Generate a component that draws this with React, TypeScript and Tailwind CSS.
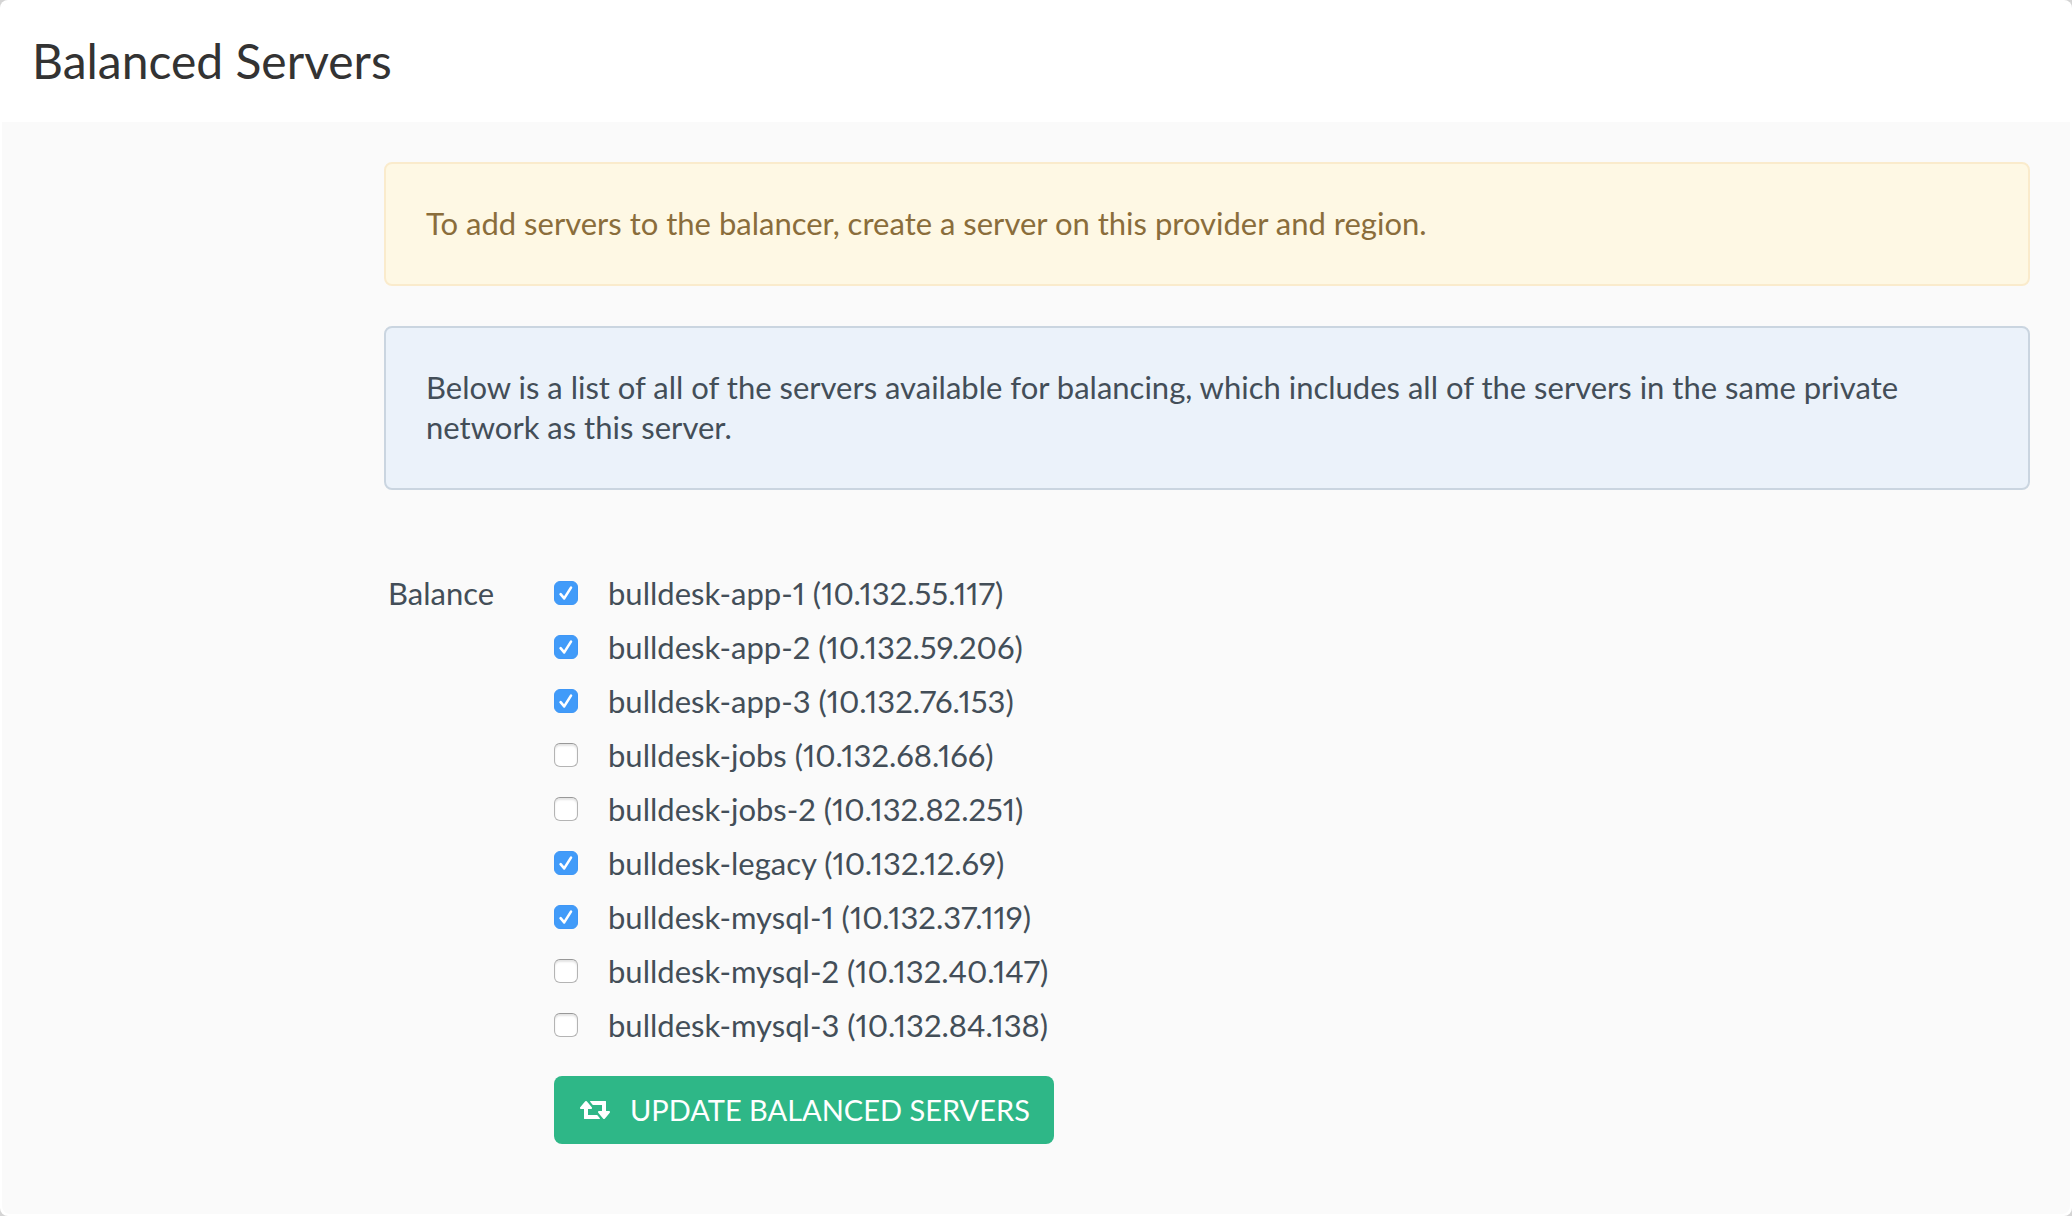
import { useState } from "react";

const SERVERS = [
  { name: "bulldesk-app-1", ip: "10.132.55.117", balanced: true },
  { name: "bulldesk-app-2", ip: "10.132.59.206", balanced: true },
  { name: "bulldesk-app-3", ip: "10.132.76.153", balanced: true },
  { name: "bulldesk-jobs", ip: "10.132.68.166", balanced: false },
  { name: "bulldesk-jobs-2", ip: "10.132.82.251", balanced: false },
  { name: "bulldesk-legacy", ip: "10.132.12.69", balanced: true },
  { name: "bulldesk-mysql-1", ip: "10.132.37.119", balanced: true },
  { name: "bulldesk-mysql-2", ip: "10.132.40.147", balanced: false },
  { name: "bulldesk-mysql-3", ip: "10.132.84.138", balanced: false },
];

function RetweetIcon() {
  return (
    <svg viewBox="0 128 1920 1152" className="h-[18px] w-[30px] shrink-0" fill="currentColor" aria-hidden="true">
      <path d="M1280 1248q0 13-9.5 22.5t-22.5 9.5h-960q-8 0-13.5-2t-9-7-5.5-8-3-11.5-1-11.5v-600h-192q-26 0-45-19t-19-45q0-24 15-41l320-384q19-22 49-22t49 22l320 384q15 17 15 41 0 26-19 45t-45 19h-192v384h576q16 0 25 11l160 192q7 10 7 21zm640-416q0 24-15 41l-320 384q-20 23-49 23t-49-23l-320-384q-15-17-15-41 0-26 19-45t45-19h192v-384h-576q-16 0-25-12l-160-192q-7-9-7-20 0-13 9.5-22.5t22.5-9.5h960q8 0 13.5 2t9 7 5.5 8 3 11.5 1 11.5v600h192q26 0 45 19t19 45z" />
    </svg>
  );
}

function Checkbox({ id, checked, onChange }: { id: string; checked: boolean; onChange: () => void }) {
  return (
    <span className="relative flex size-6 shrink-0">
      <input
        id={id}
        type="checkbox"
        checked={checked}
        onChange={onChange}
        className="peer size-6 appearance-none rounded-md border border-[#b4b4b4] border-t-[#989898] bg-white shadow-[inset_0_2px_2px_#e4e4e4] checked:border-[#3f97f6] checked:bg-[#419bf9] checked:shadow-none"
      />
      <svg
        viewBox="0 0 24 24"
        className="pointer-events-none absolute inset-0 hidden size-6 peer-checked:block"
        fill="none"
        stroke="white"
        strokeWidth="2.6"
        strokeLinecap="round"
        strokeLinejoin="round"
        aria-hidden="true"
      >
        <path d="M6.6 13.2 10.2 17.4 17 6.6" />
      </svg>
    </span>
  );
}

export default function App() {
  const [servers, setServers] = useState(SERVERS);
  const toggle = (name: string) =>
    setServers((list) => list.map((s) => (s.name === name ? { ...s, balanced: !s.balanced } : s)));

  return (
    <div className="bg-[#d4d4d4] font-['Lato',sans-serif] text-[31px] leading-10 text-[#434e58]">
      <main className="rounded-lg bg-white p-0.5">
        <header className="px-[30px] pt-[31px] pb-[33px]">
          <h1 className="text-5xl leading-14 text-[#333333]">Balanced Servers</h1>
        </header>
        <section className="rounded-b-lg bg-[#fafafa] pt-10 pr-10 pb-[70px] pl-[382px]">
          <p className="rounded-lg border-2 border-[#faebcc] bg-[#fef8e4] px-10 pt-[39px] pb-[41px] text-[#8a6d3b]">
            To add servers to the balancer, create a server on this provider and region.
          </p>
          <p className="mt-10 rounded-lg border-2 border-[#cad5e0] bg-[#ebf2fa] px-10 pt-[39px] pb-[41px]">
            Below is a list of all of the servers available for balancing, which includes all of the servers in the same
            private network as this server.
          </p>
          <form className="mt-[76px] flex" onSubmit={(e) => e.preventDefault()}>
            <span id="balance-label" className="w-[170px] shrink-0 pl-1 leading-[54px]">
              Balance
            </span>
            <div>
              <ul role="group" aria-labelledby="balance-label">
                {servers.map((s) => (
                  <li key={s.name} className="flex h-[54px] items-center">
                    <Checkbox id={s.name} checked={s.balanced} onChange={() => toggle(s.name)} />
                    <label htmlFor={s.name} className="pl-[30px] proportional-nums">
                      {s.name} ({s.ip})
                    </label>
                  </li>
                ))}
              </ul>
              <button
                type="submit"
                className="mt-6 flex h-[68px] items-center gap-5 rounded-lg bg-[#2eb787] pr-6 pl-[26px] text-[29px] text-white uppercase"
              >
                <RetweetIcon />
                Update Balanced Servers
              </button>
            </div>
          </form>
        </section>
      </main>
    </div>
  );
}
